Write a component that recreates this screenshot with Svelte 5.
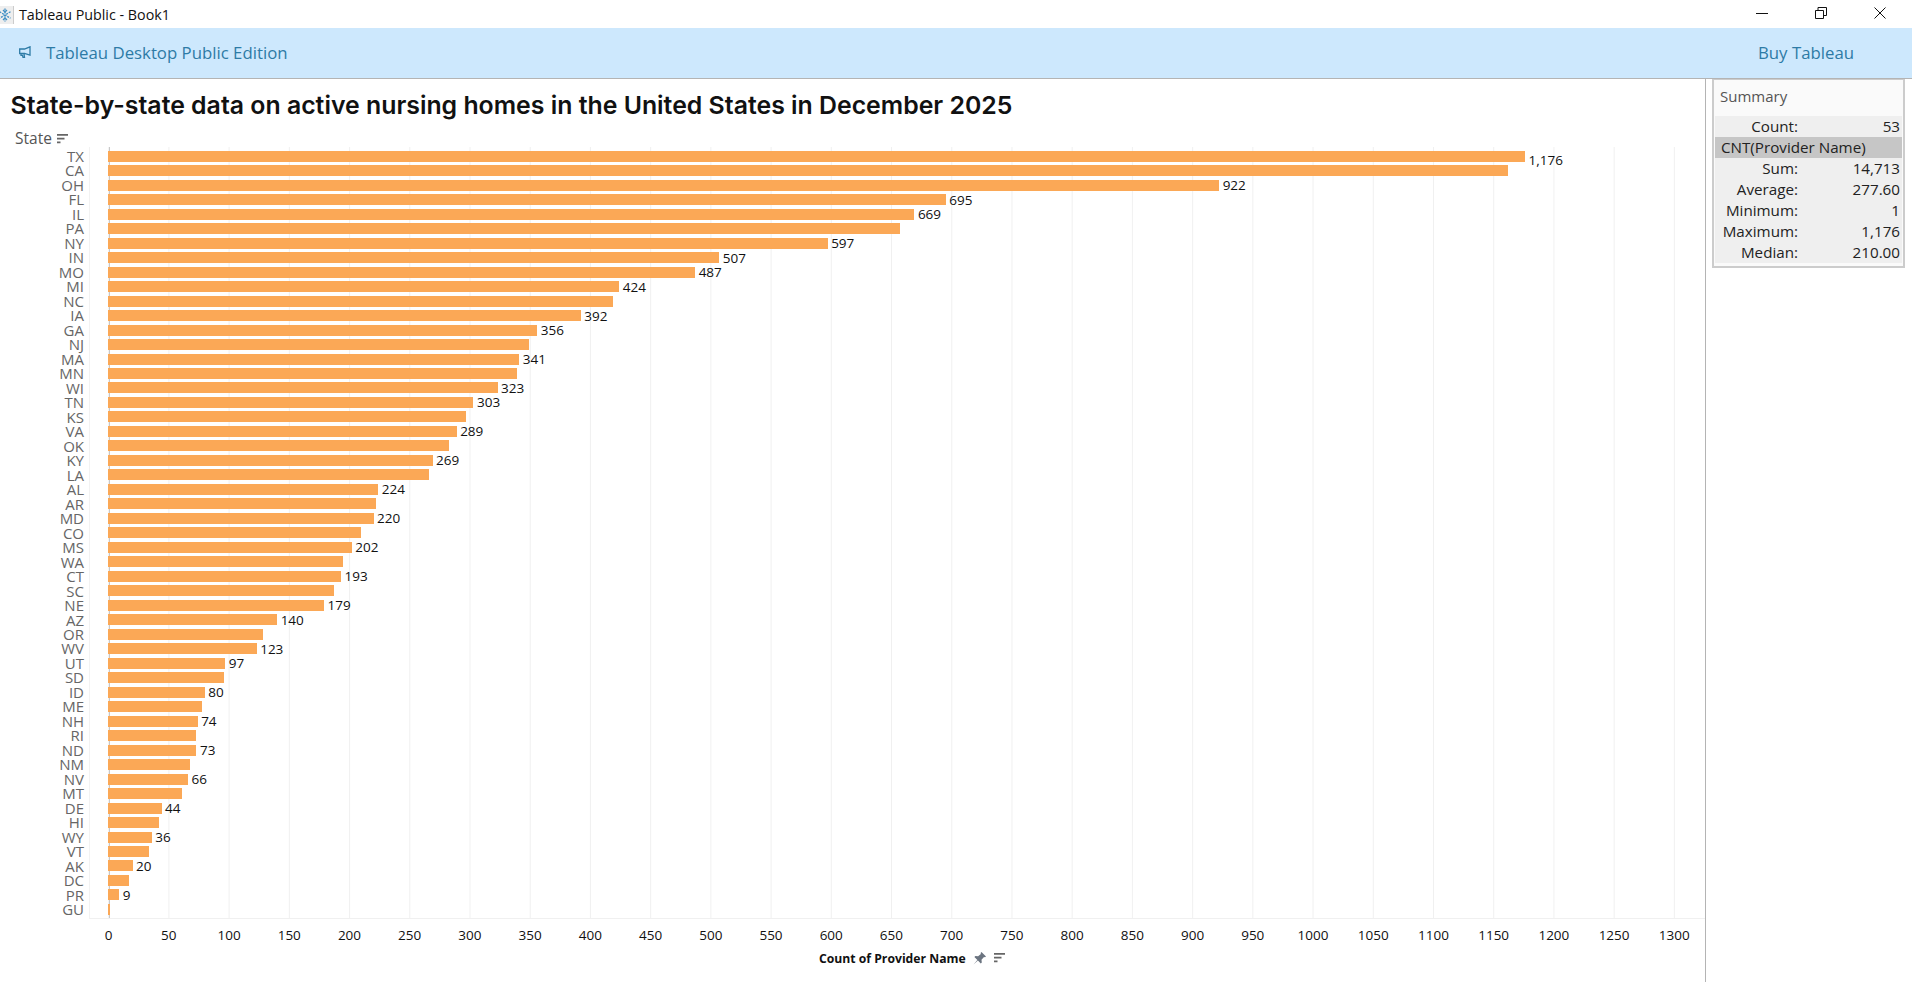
<script>
  const rows = [
    ['TX', 1176, true], ['CA', 1162], ['OH', 922, true], ['FL', 695, true], ['IL', 669, true],
    ['PA', 657], ['NY', 597, true], ['IN', 507, true], ['MO', 487, true], ['MI', 424, true],
    ['NC', 419], ['IA', 392, true], ['GA', 356, true], ['NJ', 349], ['MA', 341, true],
    ['MN', 339], ['WI', 323, true], ['TN', 303, true], ['KS', 297], ['VA', 289, true],
    ['OK', 283], ['KY', 269, true], ['LA', 266], ['AL', 224, true], ['AR', 222],
    ['MD', 220, true], ['CO', 210], ['MS', 202, true], ['WA', 195], ['CT', 193, true],
    ['SC', 187], ['NE', 179, true], ['AZ', 140, true], ['OR', 128], ['WV', 123, true],
    ['UT', 97, true], ['SD', 96], ['ID', 80, true], ['ME', 78], ['NH', 74, true],
    ['RI', 73], ['ND', 73, true], ['NM', 68], ['NV', 66, true], ['MT', 61],
    ['DE', 44, true], ['HI', 42], ['WY', 36, true], ['VT', 34], ['AK', 20, true],
    ['DC', 17], ['PR', 9, true], ['GU', 1]
  ]
  const scale = 1.2046
  const ticks = []
  for (let i = 0; i <= 1300; i += 50) ticks.push(i)
  const fmt = (n) => n.toLocaleString('en-US')
  const summary = [
    ['Sum:', '14,713'], ['Average:', '277.60'], ['Minimum:', '1'],
    ['Maximum:', '1,176'], ['Median:', '210.00']
  ]
</script>

<div class="app">
  <header class="titlebar">
    <div class="title-left">
      <div class="logo">
        <svg width="14" height="16" viewBox="0 0 14 16" fill="none" stroke="#3f8fc4" stroke-width="1.300">
          <path d="M6 1.500v13M.5 4.800l11 6.400M11.500 4.800l-11 6.400" stroke-dasharray="2 1"/>
          <path d="M4 3 6 5l2-2M4 13l2-2 2 2"/>
        </svg>
      </div>
      <span>Tableau Public - Book1</span>
    </div>
    <div class="win-buttons">
      <svg width="12" height="12" viewBox="0 0 12 12" fill="none" stroke="#111"><path d="M0 6.500h12"/></svg>
      <svg width="12" height="12" viewBox="0 0 12 12" fill="none" stroke="#111"><path d="M.5 3.500h8v8h-8zM3 3.500V.5h8.500v8H8.500"/></svg>
      <svg width="12" height="12" viewBox="0 0 12 12" fill="none" stroke="#111"><path d="M.5.500l11 11M11.500.500l-11 11"/></svg>
    </div>
  </header>

  <div class="banner">
    <div class="banner-left">
      <svg width="12" height="12" viewBox="0 0 12 12" fill="none" stroke="#2d7ba6" stroke-width="1.300"><path d="M11 .8v8.400L5.500 7.500H.7V3h4.800zM2 7.500v1.800h1.500L4 11.300h1.500L5 7.700"/></svg>
      <span>Tableau Desktop Public Edition</span>
    </div>
    <span class="buy">Buy Tableau</span>
  </div>

  <main class="main">
    <section class="sheet">
      <h1>State-by-state data on active nursing homes in the United States in December 2025</h1>
      <div class="field-head">
        State
        <svg width="11" height="10" viewBox="0 0 11 10" fill="#666"><path d="M0 0h11v1.700H0zM0 3.800h7.500v1.700H0zM0 7.600h3.500v1.700H0z"/></svg>
      </div>
      <div class="chart">
        <div class="labels">
          {#each rows as r}
            <div class="state">{r[0]}</div>
          {/each}
        </div>
        <div class="plot">
          {#each rows as r}
            <div class="row">
              <div class="bar" style="width:{0.5 + r[1] * scale}px"></div>
              {#if r[2]}<span class="val" class:low={r[1] > 1000}>{fmt(r[1])}</span>{/if}
            </div>
          {/each}
        </div>
      </div>
      <div class="axis">
        {#each ticks as t}
          <span class="tick">{t}</span>
        {/each}
      </div>
      <div class="axis-title">
        <b>Count of Provider Name</b>
        <svg width="13" height="13" viewBox="0 0 13 13" fill="#6b7480"><path d="M8.500 0 13 4.500l-1 .8-1-.3-2.500 2.800.3 2.700-1 1-2.900-3L.5 12.500l3.900-4.600-3-2.900 1-1 2.700.3L7.900 2l-.3-1z"/></svg>
        <svg class="sort" width="11" height="10" viewBox="0 0 11 10" fill="#666"><path d="M0 0h11v1.700H0zM0 3.800h7.500v1.700H0zM0 7.600h3.500v1.700H0z"/></svg>
      </div>
    </section>

    <aside class="side">
      <div class="card">
        <div class="card-title">Summary</div>
        <div class="table">
          <div class="line"><span class="k">Count:</span><span class="v">53</span></div>
          <div class="line head">CNT(Provider Name)</div>
          {#each summary as s}
            <div class="line"><span class="k">{s[0]}</span><span class="v">{s[1]}</span></div>
          {/each}
        </div>
      </div>
    </aside>
  </main>
</div>

<style>
  :global(body) {
    margin: 0;
    background: #fff;
  }

  .app {
    width: 1912px;
    height: 982px;
    overflow: hidden;
    display: flex;
    flex-direction: column;
    font-family: "Open Sans", sans-serif;
    color: #111;
  }

  .titlebar {
    height: 28px;
    display: flex;
    align-items: center;
    justify-content: space-between;
    font-size: 14.300px;
    flex: none;
  }

  .title-left {
    display: flex;
    align-items: center;
    gap: 5px;
  }

  .logo {
    width: 13px;
    height: 18px;
    background: #eee;
    border-right: 1px solid #ccc;
    display: flex;
    align-items: center;
    overflow: hidden;
    margin-top: 1px;
  }

  .logo svg {
    margin-left: -1px;
    flex: none;
  }

  .win-buttons {
    display: flex;
    gap: 47px;
    padding-right: 26px;
    margin-top: -2px;
  }

  .banner {
    height: 48px;
    padding-bottom: 2px;
    flex: none;
    box-sizing: content-box;
    background: #cde8fd;
    border-bottom: 1px solid #b4b4b4;
    display: flex;
    align-items: center;
    justify-content: space-between;
    color: #2d7ba6;
    font-size: 16.800px;
  }

  .banner-left {
    display: flex;
    align-items: center;
    gap: 15px;
    padding-left: 19px;
  }

  .buy {
    padding-right: 58px;
  }

  .main {
    flex: 1;
    display: flex;
    min-height: 0;
  }

  .sheet {
    width: 1705px;
    flex: none;
    box-sizing: content-box;
    border-right: 1px solid #b4b4b4;
  }

  h1 {
    margin: 0;
    padding: 9px 0 0 10.500px;
    height: 42px;
    box-sizing: content-box;
    font-family: Inter, sans-serif;
    font-size: 24.850px;
    line-height: 34px;
    font-weight: 600;
    color: #111;
    white-space: nowrap;
  }

  .field-head {
    height: 17px;
    padding-left: 15px;
    font-size: 15.500px;
    line-height: 17px;
    color: #555;
    display: flex;
    align-items: center;
    gap: 5px;
  }

  .chart {
    display: flex;
    height: 772px;
  }

  .labels {
    width: 84px;
    flex: none;
    padding-top: 2px;
  }

  .state {
    height: 14.490px;
    line-height: 14.490px;
    text-align: right;
    font-size: 15px;
    color: #666;
  }

  .plot {
    flex: 1;
    margin-left: 5px;
    padding-top: 2px;
    box-sizing: border-box;
    height: 772px;
    border-left: 1px solid #f2f2f2;
    border-bottom: 1px solid #f0f0f0;
    width: 1616px;
    background:
      linear-gradient(#c8c8c8, #c8c8c8) 18.500px 0 / 1px 100% no-repeat,
      linear-gradient(to right, #f0f0f0 1px, transparent 1px) 18.200px 0 / 60.230px 100% repeat-x;
  }

  .row {
    height: 14.490px;
    padding-left: 18px;
    display: flex;
    align-items: center;
    gap: 3.500px;
  }

  .bar {
    height: 11px;
    background: #fba856;
    flex: none;
  }

  .val {
    font-size: 13.500px;
    color: #111;
  }

  /* tableau nudges the longest bar's label down */
  .val.low {
    margin-top: 8px;
  }

  .axis {
    display: flex;
    padding-left: 78.500px;
    height: 23px;
    margin-top: 7px;
  }

  .tick {
    width: 60.230px;
    flex: none;
    text-align: center;
    font-size: 13.500px;
    line-height: 18px;
  }

  .axis-title {
    display: flex;
    align-items: center;
    gap: 7px;
    padding-left: 819px;
    font-size: 12.200px;
    height: 18px;
  }

  .sort {
    margin-left: 1px;
  }

  .side {
    flex: 1;
    padding: 0 6px;
  }

  .card {
    border: 1px solid #ccc;
    border-width: 1px 2px 2px;
    background: #fafafa;
    padding: 0 1px 3px;
    width: 187px;
  }

  .card-title {
    height: 36px;
    line-height: 32px;
    padding-left: 5px;
    font-size: 15px;
    color: #555;
  }

  .table {
    background: #efefef;
    font-size: 15.200px;
  }

  .line {
    height: 21px;
    line-height: 20px;
    display: flex;
    color: #222;
  }

  .head {
    background: #c6c6c6;
    padding-left: 6px;
  }

  .k {
    width: 83px;
    text-align: right;
  }

  .v {
    flex: 1;
    text-align: right;
    padding-right: 2px;
  }
</style>
